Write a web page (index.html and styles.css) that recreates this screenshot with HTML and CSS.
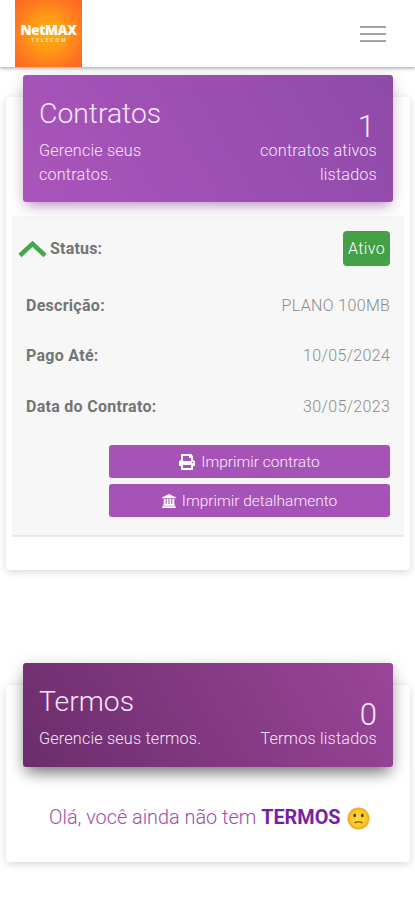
FILE: index.html
```html
<!DOCTYPE html>
<html lang="pt-BR">
<head>
<meta charset="utf-8">
<meta name="viewport" content="width=device-width, initial-scale=1">
<title>NetMAX</title>
<link rel="stylesheet" href="styles.css">
</head>
<body>
<header class="topbar">
  <div class="logo"><span class="logo-name">NetMAX</span><span class="logo-sub">TELECOM</span></div>
  <div class="menu"><span></span><span></span><span></span></div>
</header>
<main>
  <section class="card contracts">
    <div class="card-header">
      <div class="intro"><h2>Contratos</h2><p>Gerencie seus<br>contratos.</p></div>
      <div class="summary"><span class="count one">1</span><p>contratos ativos<br>listados</p></div>
    </div>
    <div class="panel">
      <div class="row status">
        <svg class="chevron" viewBox="0 0 28 18"><path d="M1.500 15.500 14 3.800l12.500 11.700" fill="none" stroke="#43a84c" stroke-width="4.600"/></svg>
        <b>Status:</b><span class="badge">Ativo</span>
      </div>
      <div class="row"><b>Descrição:</b><span class="plan">PLANO 100MB</span></div>
      <div class="row"><b>Pago Até:</b><span>10/05/2024</span></div>
      <div class="row"><b>Data do Contrato:</b><span>30/05/2023</span></div>
      <div class="actions">
        <a class="btn"><svg class="printer" viewBox="0 0 512 512"><path fill="currentColor" d="M448 192V77.300c0-8.500-3.400-16.600-9.400-22.600L393.400 9.400c-6-6-14.100-9.400-22.600-9.400H96C78.300 0 64 14.300 64 32v160c-35.300 0-64 28.700-64 64v112c0 8.800 7.200 16 16 16h48v96c0 17.700 14.300 32 32 32h320c17.700 0 32-14.300 32-32v-96h48c8.800 0 16-7.200 16-16V256c0-35.300-28.700-64-64-64zm-64 256H128v-96h256v96zm0-224H128V64h192v48c0 8.800 7.200 16 16 16h48v96zm48 72c-13.300 0-24-10.700-24-24s10.700-24 24-24 24 10.700 24 24-10.700 24-24 24z"/></svg><span class="print-label">Imprimir contrato</span></a>
        <a class="btn"><svg class="bank" viewBox="0 0 14 14"><path fill="currentColor" d="M7 0 13.800 3.200V4.300H.2V3.200zM1.700 5h2v5h1V5h1.800v5h1V5h1.800v5h1V5h2v5.500h.7v1.200H1V10.500h.7zM.2 12.300h13.600V14H.2z"/></svg><span>Imprimir detalhamento</span></a>
      </div>
    </div>
  </section>
  <section class="card terms">
    <div class="card-header">
      <div class="intro"><h2>Termos</h2><p>Gerencie seus termos.</p></div>
      <div class="summary"><span class="count">0</span><p>Termos listados</p></div>
    </div>
    <div class="empty">
      <span>Olá, você ainda não tem <strong>TERMOS</strong></span>
      <svg class="face" viewBox="0 0 24 24"><defs><radialGradient id="skin"><stop offset="0" stop-color="#ffda35"/><stop offset=".7" stop-color="#fcc827"/><stop offset="1" stop-color="#eea720"/></radialGradient></defs><circle cx="12" cy="12" r="11.500" fill="url(#skin)"/><ellipse cx="8" cy="8.800" rx="1.300" ry="2" fill="#4b3514"/><ellipse cx="16" cy="8.800" rx="1.300" ry="2" fill="#4b3514"/><path d="M8.300 16.300q3.700-1.800 7.400 0" fill="none" stroke="#644512" stroke-width="1.200" stroke-linecap="round"/></svg>
    </div>
  </section>
</main>
</body>
</html>
```
FILE: styles.css
```css
* { box-sizing: border-box; }
body {
  margin: 0;
  height: 900px;
  overflow: hidden;
  background: #fff;
  color: #6d6d6d;
  font: 300 16px/24px Roboto, sans-serif;
}
h2, p { margin: 0; font-weight: 300; }
p { font-size: 16.200px; letter-spacing: .18px; }
.topbar {
  height: 67px;
  padding: 0 29px 0 15px;
  display: flex;
  justify-content: space-between;
  background: #fff;
  box-shadow: 0 1px 4px rgba(0, 0, 0, .4);
}
.logo {
  width: 67px;
  height: 67px;
  padding-top: 23px;
  display: flex;
  flex-direction: column;
  align-items: center;
  color: #fff;
  background: radial-gradient(circle at 50% 50%, #ffae0c 0, #ff9b15 35%, #ff7521 75%, #fc6424 100%);
}
.logo-name { font: 800 13.4px/15px "Open Sans", sans-serif; letter-spacing: -.3px; }
.logo-sub { font: 700 4.5px/5px "Open Sans", sans-serif; letter-spacing: 2.200px; margin: 0 0 0 2px; opacity: .75; }
.menu {
  width: 26px;
  padding-top: 26px;
  display: flex;
  flex-direction: column;
  gap: 5px;
}
.menu span { height: 2px; background: #a3a3a3; }
.card {
  width: 404px;
  margin-left: 6px;
  padding: 0 6px;
  border-radius: 4px;
  background: #fff;
  box-shadow: 0 2px 9px rgba(0, 0, 0, .16);
}
.contracts { height: 473px; margin-top: 30px; }
.terms { height: 177px; margin-top: 115px; }
.card-header {
  position: relative;
  top: -22px;
  width: 370px;
  margin-left: 11px;
  padding: 21px 16px 0;
  display: flex;
  justify-content: space-between;
  color: #f7e6fb;
  border-radius: 3px;
}
.contracts .card-header {
  height: 127px;
  background: linear-gradient(60deg, #aa55bb, #8f4aa9);
  box-shadow: 0 4px 18px rgba(0, 0, 0, .14), 0 6px 11px -4px rgba(156, 39, 176, .45);
}
.terms .card-header {
  height: 104px;
  background: linear-gradient(60deg, #6c2d6b, #9a4599);
  box-shadow: 0 4px 18px rgba(0, 0, 0, .18), 0 9px 14px -4px rgba(0, 0, 0, .45);
}
h2 { font-size: 28.300px; line-height: 35px; }
.intro p { margin-top: 8px; }
.summary { padding-top: 17px; text-align: right; }
.count { display: block; font-size: 31px; line-height: 28px; }
.one { padding-right: 2px; }
.summary p { margin-top: -2px; }
.panel {
  height: 321px;
  margin-top: -8px;
  padding: 15px 14px 0;
  background: #f7f7f7;
  border-bottom: 2px solid #e9e9e9;
}
.row {
  height: 50.300px;
  display: flex;
  align-items: center;
  justify-content: space-between;
}
.row b { font-weight: 700; color: #747474; letter-spacing: .28px; }
.row > span { color: #8c8c8c; letter-spacing: .36px; margin-right: -.3px; }
.row.status { height: 35px; margin: 0 0 15px -8px; }
.row.status b { letter-spacing: .2px; }
.chevron { width: 29px; height: 18px; margin-right: 3px; }
.row > .badge {
  width: 47px;
  height: 35px;
  margin: 0 0 0 auto;
  color: #fff;
  line-height: 35px;
  text-align: center;
  background: #43a047;
  border-radius: 4px;
}
.actions { margin: 13px 0 0 83px; display: grid; gap: 6px; }
.btn {
  height: 33px;
  padding-top: 1px;
  display: flex;
  align-items: center;
  justify-content: center;
  gap: 6px;
  color: #fcebff;
  font-size: 15.500px;
  background: #a653b8;
  border-radius: 3px;
}
.printer { width: 16px; height: 16px; color: #fff; }
.bank { width: 14px; height: 14px; color: #fff; }
.empty {
  display: flex;
  align-items: center;
  padding-left: 37px;
  margin-top: 17px;
  font-size: 19.850px;
  white-space: nowrap;
  color: #9c4caf;
}
.empty strong { font-weight: 700; color: #7b1fa2; }
.face { width: 23px; height: 23px; margin-left: 6px; }
```
